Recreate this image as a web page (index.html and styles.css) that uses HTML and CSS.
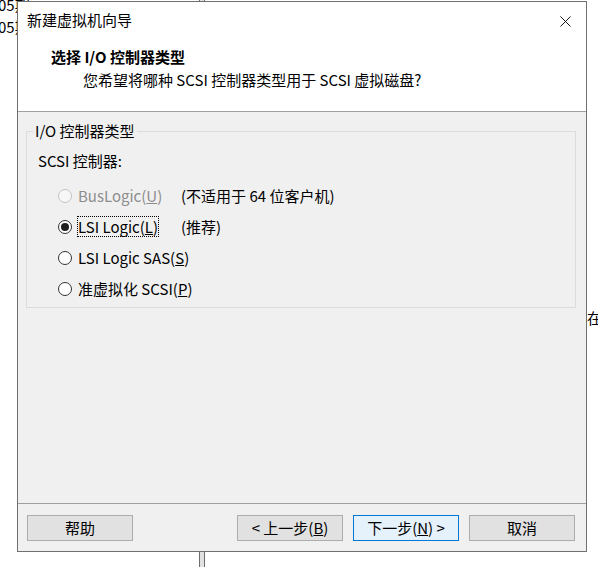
FILE: index.html
```html
<!DOCTYPE html>
<html lang="zh-CN">
<head>
    <meta charset="UTF-8">
    <title>新建虚拟机向导</title>
    <link rel="stylesheet" href="styles.css">
</head>
<body>
    <div class="desk-text desk-line-1">05期</div>
    <div class="desk-text desk-line-2">05期</div>
    <div class="desk-text desk-right">在</div>
    <div class="desk-bar"></div>

    <div class="dialog">
        <div class="dialog-header">
            <div class="title-row">
                <span class="title">新建虚拟机向导</span>
                <svg class="close" width="12" height="12" viewBox="0 0 12 12">
                    <path d="M0.5 0.5 L11.5 11.5 M11.5 0.5 L0.5 11.5" stroke="#000" stroke-width="1"/>
                </svg>
            </div>
            <div class="heading">选择 I/O 控制器类型</div>
            <div class="subheading">您希望将哪种 SCSI 控制器类型用于 SCSI 虚拟磁盘?</div>
        </div>

        <div class="dialog-body">
            <fieldset class="group">
                <legend>I/O 控制器类型</legend>
                <div class="group-label">SCSI 控制器:</div>
                <div class="options">
                    <div class="option disabled">
                        <span class="radio"></span>
                        <span class="option-label">BusLogic(<u>U</u>)</span>
                        <span class="option-note">(不适用于 64 位客户机)</span>
                    </div>
                    <div class="option">
                        <span class="radio checked"></span>
                        <span class="option-label focused">LSI Logic(<u>L</u>)</span>
                        <span class="option-note">(推荐)</span>
                    </div>
                    <div class="option">
                        <span class="radio"></span>
                        <span class="option-label wide">LSI Logic SAS(<u>S</u>)</span>
                    </div>
                    <div class="option">
                        <span class="radio"></span>
                        <span class="option-label wide">准虚拟化 SCSI(<u>P</u>)</span>
                    </div>
                </div>
            </fieldset>
        </div>

        <div class="dialog-footer">
            <button class="btn">帮助</button>
            <div class="nav-buttons">
                <button class="btn">&lt; 上一步(<u>B</u>)</button>
                <button class="btn default">下一步(<u>N</u>) &gt;</button>
                <button class="btn">取消</button>
            </div>
        </div>
    </div>
</body>
</html>
```

FILE: styles.css
```css
body {
    margin: 0;
    width: 598px;
    height: 567px;
    overflow: hidden;
    position: relative;
    background: #fff;
    font-family: "Noto Sans CJK SC", "Noto Sans", sans-serif;
    font-size: 15px;
    line-height: 20px;
    color: #000;
}

/* things behind the dialog window */
.desk-text {
    position: absolute;
    font-size: 15px;
    line-height: 20px;
}
.desk-line-1 {
    left: -2px;
    top: -5px;
}
.desk-line-2 {
    left: -2px;
    top: 17px;
}
.desk-right {
    left: 587px;
    top: 308px;
}
.desk-bar {
    position: absolute;
    left: 199px;
    top: 0;
    width: 6px;
    height: 567px;
    box-sizing: border-box;
    border-left: 1px solid #6d6d6d;
    border-right: 1px solid #6d6d6d;
    background: #e1e1e1;
}

.dialog {
    position: relative;
    z-index: 1;
    margin: 1px 0 0 17px;
    width: 570px;
    height: 551px;
    box-sizing: border-box;
    border: 1px solid #707070;
    background: #f0f0f0;
    display: flex;
    flex-direction: column;
}

.dialog-header {
    background: #fff;
    height: 110px;
    box-sizing: border-box;
    border-bottom: 1px solid #a0a0a0;
    padding-top: 8px;
}
.title-row {
    display: flex;
    justify-content: space-between;
    align-items: flex-start;
    padding: 0 15px 0 9px;
}
.close {
    margin-top: 6px;
    width: 11px;
    height: 11px;
}
.heading {
    margin: 17px 0 0 33px;
    font-weight: bold;
}
.subheading {
    margin: 3px 0 0 65px;
}

.dialog-body {
    height: 391px;
}
.group {
    margin: 9px 10px 0 8px;
    padding: 0 0 3px 6px;
    min-width: 0;
    border: 1px solid #dcdcdc;
}
.group legend {
    padding: 0 2px;
    line-height: 20px;
}
.group-label {
    margin: 10px 0 0 5px;
}
.options {
    margin-top: 9px;
    padding-left: 25px;
}
.option {
    display: grid;
    grid-template-columns: 14px 99px auto;
    column-gap: 5px;
    align-items: center;
    height: 31px;
}
.option-label {
    line-height: 19px;
    border: 1px dotted transparent;
    justify-self: start;
    white-space: nowrap;
}
.option-label.wide {
    grid-column: 2 / 4;
}
.option-label.focused {
    border-color: #000;
}
.option-note {
    line-height: 19px;
    white-space: nowrap;
}
.option.disabled .option-label {
    color: #8d8d8d;
}

.radio {
    width: 14px;
    height: 14px;
    box-sizing: border-box;
    border: 1px solid #333;
    border-radius: 50%;
    background: #fff;
    position: relative;
}
.radio.checked::after {
    content: "";
    position: absolute;
    left: 2px;
    top: 2px;
    width: 8px;
    height: 8px;
    border-radius: 50%;
    background: #1e1e1e;
}
.option.disabled .radio {
    border-color: #c3c3c3;
    background: #f7f7f7;
}

.dialog-footer {
    border-top: 1px solid #a0a0a0;
    flex: 1;
    display: flex;
    align-items: flex-start;
    justify-content: space-between;
    padding: 11px 11px 0 9px;
}
.nav-buttons {
    display: flex;
    gap: 10px;
}
.btn {
    width: 106px;
    height: 26px;
    padding: 0;
    margin: 0;
    font-family: inherit;
    font-size: 15px;
    line-height: 24px;
    color: #000;
    background: #e1e1e1;
    border: 1px solid #adadad;
}
.btn.default {
    background: #e5f1fb;
    border-color: #0078d7;
}
```
